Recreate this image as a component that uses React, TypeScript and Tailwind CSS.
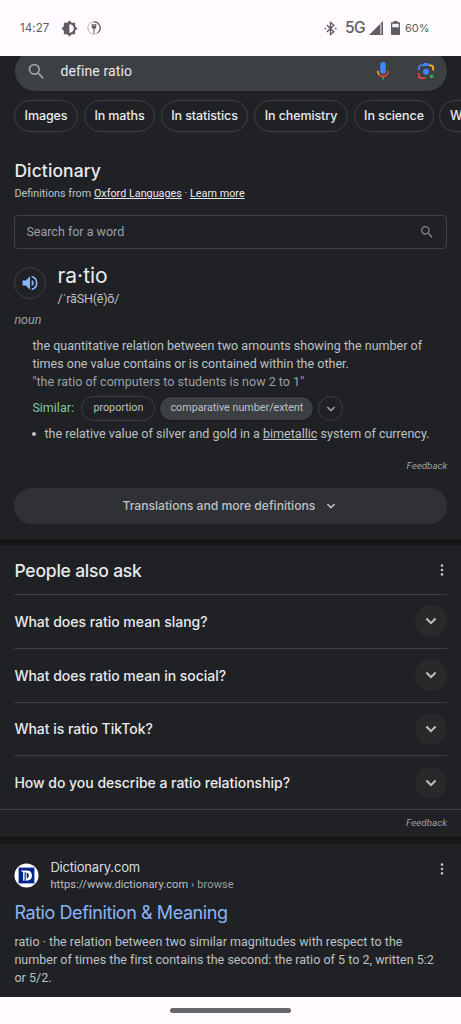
import type { ReactNode } from 'react';

const display = "font-['Google_Sans','Inter',sans-serif]";

function Search({ className }: { className: string }) {
  return (
    <svg viewBox="0 0 24 24" className={className} fill="currentColor">
      <path d="M15.5 14h-.79l-.28-.27A6.47 6.47 0 0 0 16 9.5 6.5 6.5 0 1 0 9.5 16c1.61 0 3.09-.59 4.23-1.57l.27.28v.79l5 4.99L20.49 19l-4.99-5zm-6 0a4.5 4.5 0 1 1 0-9 4.5 4.5 0 0 1 0 9z" />
    </svg>
  );
}

function Chevron({ className }: { className: string }) {
  return (
    <svg viewBox="0 0 24 24" className={className} fill="currentColor">
      <path d="M7.41 8.2 12 12.78l4.59-4.58L18.3 9.9 12 16.2 5.7 9.9z" />
    </svg>
  );
}

function Dots() {
  return (
    <svg viewBox="0 0 4 12" className="h-3 w-1 shrink-0 fill-[#bdc1c6]">
      <circle cx="2" cy="1.6" r="1.3" />
      <circle cx="2" cy="6" r="1.3" />
      <circle cx="2" cy="10.4" r="1.3" />
    </svg>
  );
}

function StatusBar() {
  return (
    <header className="flex h-14 shrink-0 items-center bg-[#fffbff] pl-[20px] pr-[31px] text-[#605d62]">
      <span className={`${display} mt-[2px] w-[30px] whitespace-nowrap text-[11.5px] tracking-[0.1px]`}>14:27</span>
      <svg viewBox="0 0 24 24" className="ml-[11px] h-[17px] w-[17px]" fill="currentColor">
        <path d="M20 15.31 23.31 12 20 8.69V4h-4.69L12 .69 8.69 4H4v4.69L.69 12 4 15.31V20h4.69L12 23.31 15.31 20H20zM12 18V6a6 6 0 0 1 0 12z" fillRule="evenodd" />
        <path d="M12.300 6.500c7 .5 7 10.500 0 11z" fill="#fffbff" />
      </svg>
      <svg viewBox="0 0 14 14" className="ml-[9px] h-[14px] w-[14px]">
        <circle cx="7" cy="7" r="6.2" fill="none" stroke="#aaa7ab" strokeWidth=".9" />
        <path d="M7 .8a6.2 6.2 0 0 1 3.5 11.3" fill="none" stroke="#605d62" strokeWidth="1.2" />
        <path d="M4.7 3h4.6v2.8c0 1.2-.8 2-1.8 2.1v4.6h-1V7.9c-1-.1-1.8-.9-1.8-2.1z" fill="#605d62" />
        <path d="M6.2 3v2M7.8 3v2" stroke="#fffbff" strokeWidth=".5" />
      </svg>
      <div className="flex-1" />
      <svg viewBox="0 0 14 16" className="h-[15px] w-[13px]" fill="none" stroke="currentColor" strokeWidth="1.5">
        <path d="M3 4.3 10.6 11.5 7 14.5V1.5l3.6 3L3 11.7" />
        <path d="M.5 8h1.8M11.7 8h1.8" strokeWidth="1.7" />
      </svg>
      <span className={`${display} ml-[8px] w-[20px] whitespace-nowrap text-[15.5px] font-medium tracking-[-0.6px]`}>5G</span>
      <svg viewBox="0 0 14 14" className="ml-[4px] h-[14px] w-[14px]">
        <path d="M0 14 14 0v14z" fill="#605d62" />
        <path d="M11.3 3.2v10.1h1.1V2.1z" fill="#e6e2e6" />
      </svg>
      <svg viewBox="0 0 9 14" className="ml-[8px] h-[14px] w-[9px]">
        <path d="M2.5 0h4v1.3H8c.6 0 1 .4 1 1V13c0 .6-.4 1-1 1H1c-.6 0-1-.4-1-1V2.3c0-.6.4-1 1-1h1.5z" fill="#605d62" />
        <path d="M1.2 2.8h6.6v3.5H1.2z" fill="#f4f0f4" />
      </svg>
      <span className={`${display} ml-[5px] w-[25px] whitespace-nowrap text-[11px]`}>60%</span>
    </header>
  );
}

function SearchBar() {
  return (
    <div className="h-9 shrink-0 overflow-hidden pl-[14.500px] pr-[14px]">
      <div className="-mt-[5px] flex h-10 items-center rounded-full bg-[#3c4043] pl-[11px] pr-[12px] shadow">
        <Search className="h-[21px] w-[21px] text-[#9aa0a6]" />
        <span className="ml-[14px] text-[14px] tracking-[0.1px] text-[#e8eaed]">define ratio</span>
        <div className="flex-1" />
        <svg viewBox="0 0 14 20" className="h-5 w-[14px]" fill="none" strokeWidth="1.6">
          <rect x="4.2" y="1" width="5.6" height="11.500" rx="2.6" fill="#4285f4" />
          <path d="M1.7 9.8c0 1.900.7 3.300 1.700 4.200" stroke="#fbbc04" />
          <path d="M3 13.700c2.200 2.200 5.800 2.200 8 0 .9-1 1.300-2.300 1.300-3.900" stroke="#ea4335" />
          <path d="M7 16v2.700" stroke="#34a853" />
        </svg>
        <svg viewBox="0 0 18 18" className="ml-[27px] h-[18px] w-[18px]" fill="none" strokeWidth="1.800">
          <path d="M1.800 8V6c0-1.700 1-2.700 2.700-2.700h2L7.600 1.800h3l1.100 1.500" stroke="#4285f4" />
          <path d="M5.500 3 7 .9h4L12.500 3v1h-7z" fill="#4285f4" />
          <path d="M12.200 3.300h1.300c1.700 0 2.700 1 2.700 2.700v2.500" stroke="#fbbc04" />
          <path d="M1.800 11v2.500c0 1.700 1 2.700 2.700 2.700h4" stroke="#ea4335" />
          <circle cx="9" cy="9.800" r="3" fill="#4285f4" />
          <circle cx="14.600" cy="14.300" r="1.900" fill="#34a853" />
        </svg>
      </div>
    </div>
  );
}

function Chip({ w, children }: { w: string; children: ReactNode }) {
  return (
    <div className={`flex h-8 shrink-0 items-center justify-center rounded-full border border-[#3c4043] text-[12.5px] font-medium tracking-[-0.1px] text-[#e8eaed] ${display} ${w}`}>
      {children}
    </div>
  );
}

function Question({ children }: { children: ReactNode }) {
  return (
    <div className="flex h-[53.8px] items-center justify-between border-t border-[#3c4043]">
      <span className={`${display} text-[14px] font-medium tracking-[-0.02px] text-[#e8eaed]`}>{children}</span>
      <div className="flex h-8 w-8 items-center justify-center rounded-full bg-[#28292a]">
        <Chevron className="h-[20px] w-[20px] text-[#bdc1c6]" />
      </div>
    </div>
  );
}

export default function App() {
  return (
    <div className="flex h-[1024px] w-[461px] flex-col overflow-hidden bg-[#202124] font-['Roboto',sans-serif] text-[#bdc1c6]">
      <StatusBar />
      <SearchBar />

      <nav className="mt-2 flex shrink-0 gap-[6px] overflow-hidden pl-[14px]">
        <Chip w="w-[64px]">Images</Chip>
        <Chip w="w-[71px]">In maths</Chip>
        <Chip w="w-[87px]">In statistics</Chip>
        <Chip w="w-[94px]">In chemistry</Chip>
        <Chip w="w-[80px]">In science</Chip>
        <div className={`-ml-px flex h-8 w-[80px] shrink-0 items-center rounded-full border border-[#3c4043] pl-[10px] text-[12.5px] font-medium text-[#e8eaed] ${display}`}>
          W
        </div>
      </nav>

      <section className="h-[407px] shrink-0 pl-[14.400px] pr-[13.600px] pt-[27px]">
        <h2 className={`${display} h-6 text-[17.500px] font-medium leading-6 tracking-[0.1px] text-[#e8eaed]`}>Dictionary</h2>
        <p className="mt-px h-5 whitespace-nowrap text-[10.800px] leading-5">
          Definitions from <a className="text-[#e8eaed] underline">Oxford Languages</a> · <a className="text-[#e8eaed] underline">Learn more</a>
        </p>
        <div className="mt-[11px] flex h-[34px] items-center justify-between rounded border border-[#3c4043] pl-[11px] pr-[11px] text-[12.500px] text-[#9aa0a6]">
          <span>Search for a word</span>
          <Search className="h-4 w-4 text-[#80868b]" />
        </div>

        <div className="mt-[14px] flex h-[48px]">
          <div className="mt-[4px] flex h-8 w-8 items-center justify-center rounded-full border border-[#3c4043]">
            <svg viewBox="0 0 24 24" className="h-[20px] w-[20px] fill-[#8ab4f8]">
              <path d="M3 9v6h4l5 5V4L7 9zm13.500 3A4.500 4.500 0 0 0 14 7.970v8.050A4.500 4.500 0 0 0 16.500 12zM14 3.230v2.060a7 7 0 0 1 0 13.420v2.060a9 9 0 0 0 0-17.540z" />
            </svg>
          </div>
          <div className="ml-[11px]">
            <h3 className={`${display} h-[26px] text-[21px] leading-[26px] text-[#e8eaed]`}>ra·tio</h3>
            <p className="h-5 text-[12.500px] leading-5 tracking-[-0.2px]">/ˈrāSH(ē)ō/</p>
          </div>
        </div>
        <p className="mt-px h-4 text-[12.500px] italic leading-4 text-[#9aa0a6]">noun</p>

        <div className="mt-[9px] whitespace-nowrap pl-[18px] text-[12.500px] leading-[18px] tracking-[0.02px]">
          <p>the quantitative relation between two amounts showing the number of</p>
          <p>times one value contains or is contained within the other.</p>
          <p className="text-[#9aa0a6]">"the ratio of computers to students is now 2 to 1"</p>
          <div className="mt-[5px] flex h-[25px] items-center text-[10.750px] tracking-normal">
            <span className="mb-[2px] w-[49px] text-[12.500px] text-[#81c995]">Similar:</span>
            <span className="flex h-[25px] w-[74px] items-center justify-center rounded-full border border-[#3c4043] pb-px">proportion</span>
            <span className="ml-1 flex h-[25px] w-[155px] items-center justify-center rounded-full border border-[#171717] bg-[#3c4043] pb-px">comparative number/extent</span>
            <span className="ml-1 flex h-[25px] w-[25px] items-center justify-center rounded-full border border-[#3c4043]">
              <Chevron className="h-4 w-4 text-[#9aa0a6]" />
            </span>
          </div>
          <div className="mt-[4px] flex items-center">
            <span className="h-[4px] w-[4px] rounded-full bg-[#bdc1c6]" />
            <p className="ml-[8px]">the relative value of silver and gold in a <a className="underline">bimetallic</a> system of currency.</p>
          </div>
        </div>

        <p className="mt-[14px] text-right text-[9.800px] italic leading-[18px] text-[#9aa0a6]">Feedback</p>
        <button className={`mt-[13px] flex h-9 w-full items-center justify-center rounded-full bg-[#303134] text-[12.200px] font-medium tracking-[-0.030px] ${display}`}>
          Translations and more definitions
          <Chevron className="ml-[8px] h-4 w-4" />
        </button>
      </section>

      <div className="h-[6px] shrink-0 bg-[#171717]" />

      <section className="h-[292px] shrink-0">
        <div className="pl-[14.400px] pr-[13.600px]">
          <div className="flex h-[49px] items-center justify-between pr-[3px]">
            <h2 className={`${display} mt-[3px] text-[17.500px] font-medium tracking-[-0.200px] text-[#e8eaed]`}>People also ask</h2>
            <Dots />
          </div>
          <Question>What does ratio mean slang?</Question>
          <Question>What does ratio mean in social?</Question>
          <Question>What is ratio TikTok?</Question>
          <Question>How do you describe a ratio relationship?</Question>
        </div>
        <p className="border-t border-[#3c4043] pr-[14px] text-right text-[9.800px] italic leading-[25px] text-[#9aa0a6]">Feedback</p>
      </section>

      <div className="h-[7px] shrink-0 bg-[#171717]" />

      <section className="h-[153px] shrink-0 pl-[14.400px] pr-[13.600px] pt-[15px]">
        <div className="flex h-8 items-center pr-[3px]">
          <svg viewBox="0 0 26 26" className="h-[25px] w-[25px]">
            <circle cx="13" cy="13" r="12.500" fill="#fff" />
            <rect x="4.800" y="4.800" width="16.400" height="16.400" fill="#00248b" />
            <path d="M7.500 7.800h5.500c3.800 0 5.700 2 5.700 5.300s-1.900 5.300-5.700 5.300h-.8V9.700H11v8.700H9.500V10c0-.8-.7-1.200-2-1.200z" fill="#fff" />
            <path d="M13.200 10.200c1.600.3 2.200 1.300 2.200 2.900s-.6 2.600-2.200 2.900z" fill="#00248b" />
          </svg>
          <div className="ml-[11px] flex-1">
            <p className={`${display} h-[17px] text-[13px] leading-[17px] tracking-[-0.200px] text-[#dadce0]`}>Dictionary.com</p>
            <p className="h-4 text-[11px] leading-[17px] tracking-[0.11px]">https://www.dictionary.com <span className="text-[#9aa0a6]">› browse</span></p>
          </div>
          <div className="mb-3"><Dots /></div>
        </div>
        <h2 className={`${display} mt-[10px] h-6 text-[18px] leading-6 tracking-[-0.430px] text-[#8ab4f8]`}>Ratio Definition &amp; Meaning</h2>
        <div className="mt-[8px] whitespace-nowrap text-[12.500px] leading-[18px] tracking-[0.02px]">
          <p>ratio · the relation between two similar magnitudes with respect to the</p>
          <p>number of times the first contains the second: the ratio of 5 to 2, written 5:2</p>
          <p>or 5/2.</p>
        </div>
      </section>

      <footer className="flex h-[27px] shrink-0 justify-center bg-[#fffbff] pt-[11px]">
        <div className="h-[5px] w-[121px] rounded-full bg-[#67646a]" />
      </footer>
    </div>
  );
}
